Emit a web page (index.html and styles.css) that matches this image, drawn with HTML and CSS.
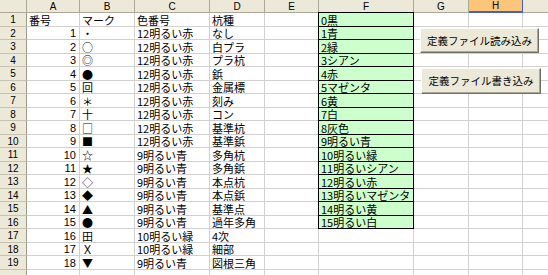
FILE: index.html
```html
<!DOCTYPE html>
<html lang="ja">
<head>
<meta charset="utf-8">
<link rel="stylesheet" href="styles.css">
</head>
<body>
<div class="wrap">
<div class="sheet">
<div class="h corner"></div><div class="h">A</div><div class="h">B</div><div class="h">C</div><div class="h">D</div><div class="h">E</div><div class="h">F</div><div class="h">G</div><div class="h sel">H</div><div class="h"></div>

<div class="rh">1</div><div class="c">番号</div><div class="c">マーク</div><div class="c">色番号</div><div class="c">杭種</div><div class="c"></div><div class="c g first">0黒</div><div class="c"></div><div class="c"></div><div class="c"></div>
<div class="rh">2</div><div class="c r">1</div><div class="c">・</div><div class="c">12明るい赤</div><div class="c">なし</div><div class="c"></div><div class="c g">1青</div><div class="c"></div><div class="c"></div><div class="c"></div>
<div class="rh">3</div><div class="c r">2</div><div class="c">○</div><div class="c">12明るい赤</div><div class="c">白プラ</div><div class="c"></div><div class="c g">2緑</div><div class="c"></div><div class="c"></div><div class="c"></div>
<div class="rh">4</div><div class="c r">3</div><div class="c">◎</div><div class="c">12明るい赤</div><div class="c">プラ杭</div><div class="c"></div><div class="c g">3シアン</div><div class="c"></div><div class="c"></div><div class="c"></div>
<div class="rh">5</div><div class="c r">4</div><div class="c">●</div><div class="c">12明るい赤</div><div class="c">鋲</div><div class="c"></div><div class="c g">4赤</div><div class="c"></div><div class="c"></div><div class="c"></div>
<div class="rh">6</div><div class="c r">5</div><div class="c">回</div><div class="c">12明るい赤</div><div class="c">金属標</div><div class="c"></div><div class="c g">5マゼンタ</div><div class="c"></div><div class="c"></div><div class="c"></div>
<div class="rh">7</div><div class="c r">6</div><div class="c">＊</div><div class="c">12明るい赤</div><div class="c">刻み</div><div class="c"></div><div class="c g">6黄</div><div class="c"></div><div class="c"></div><div class="c"></div>
<div class="rh">8</div><div class="c r">7</div><div class="c">十</div><div class="c">12明るい赤</div><div class="c">コン</div><div class="c"></div><div class="c g">7白</div><div class="c"></div><div class="c"></div><div class="c"></div>
<div class="rh">9</div><div class="c r">8</div><div class="c">□</div><div class="c">12明るい赤</div><div class="c">基準杭</div><div class="c"></div><div class="c g">8灰色</div><div class="c"></div><div class="c"></div><div class="c"></div>
<div class="rh">10</div><div class="c r">9</div><div class="c">■</div><div class="c">12明るい赤</div><div class="c">基準鋲</div><div class="c"></div><div class="c g">9明るい青</div><div class="c"></div><div class="c"></div><div class="c"></div>
<div class="rh">11</div><div class="c r">10</div><div class="c">☆</div><div class="c">9明るい青</div><div class="c">多角杭</div><div class="c"></div><div class="c g">10明るい緑</div><div class="c"></div><div class="c"></div><div class="c"></div>
<div class="rh">12</div><div class="c r">11</div><div class="c">★</div><div class="c">9明るい青</div><div class="c">多角鋲</div><div class="c"></div><div class="c g">11明るいシアン</div><div class="c"></div><div class="c"></div><div class="c"></div>
<div class="rh">13</div><div class="c r">12</div><div class="c">◇</div><div class="c">9明るい青</div><div class="c">本点杭</div><div class="c"></div><div class="c g">12明るい赤</div><div class="c"></div><div class="c"></div><div class="c"></div>
<div class="rh">14</div><div class="c r">13</div><div class="c">◆</div><div class="c">9明るい青</div><div class="c">本点鋲</div><div class="c"></div><div class="c g">13明るいマゼンタ</div><div class="c"></div><div class="c"></div><div class="c"></div>
<div class="rh">15</div><div class="c r">14</div><div class="c">▲</div><div class="c">9明るい青</div><div class="c">基準点</div><div class="c"></div><div class="c g">14明るい黄</div><div class="c"></div><div class="c"></div><div class="c"></div>
<div class="rh">16</div><div class="c r">15</div><div class="c">●</div><div class="c">9明るい青</div><div class="c">過年多角</div><div class="c"></div><div class="c g">15明るい白</div><div class="c"></div><div class="c"></div><div class="c"></div>
<div class="rh">17</div><div class="c r">16</div><div class="c">田</div><div class="c">10明るい緑</div><div class="c">4次</div><div class="c"></div><div class="c"></div><div class="c"></div><div class="c"></div><div class="c"></div>
<div class="rh">18</div><div class="c r">17</div><div class="c">Ｘ</div><div class="c">10明るい緑</div><div class="c">細部</div><div class="c"></div><div class="c"></div><div class="c"></div><div class="c"></div><div class="c"></div>
<div class="rh">19</div><div class="c r">18</div><div class="c">▼</div><div class="c">9明るい青</div><div class="c">図根三角</div><div class="c"></div><div class="c"></div><div class="c"></div><div class="c"></div><div class="c"></div>
<div class="rh"></div><div class="c"></div><div class="c"></div><div class="c"></div><div class="c"></div><div class="c"></div><div class="c"></div><div class="c"></div><div class="c"></div><div class="c"></div>
</div>
<button class="btn btn-read">定義ファイル読み込み</button>
<button class="btn btn-write">定義ファイル書き込み</button>
</div>
</body>
</html>
```
FILE: styles.css
```css
html, body {
  margin: 0;
  padding: 0;
  background: #ffffff;
  overflow: hidden;
}
.wrap {
  position: relative;
  width: 548px;
  height: 275px;
  overflow: hidden;
}
.sheet {
  display: grid;
  grid-template-columns: 27px 53px 55px 75px 55px 54px 95px 55px 54px 54px;
  grid-template-rows: repeat(11, 13px 14px);
  font-family: "Noto Sans CJK JP", "Liberation Sans", sans-serif;
  font-size: 11px;
  color: #000;
}
.h, .rh {
  background: #ece9d8;
  border-right: 1px solid #aca899;
  border-bottom: 1px solid #aca899;
  font-family: "Liberation Sans", "DejaVu Sans", sans-serif;
  font-size: 10px;
  color: #000;
  display: flex;
  align-items: center;
  justify-content: center;
  line-height: 11px;
  box-sizing: border-box;
}
.rh {
  border-bottom: 1px solid #c5c2b2;
  border-right: 1px solid #9d9a8a;
}
.sel {
  background: #fcc57a;
  border-bottom: 2px solid #4a5fc4;
  border-right: 1px solid #4a5fc4;
}
.c {
  border-right: 1px solid #d0d0d0;
  border-bottom: 1px solid #d0d0d0;
  box-sizing: border-box;
  display: flex;
  align-items: center;
  padding: 0 0 0 2px;
  line-height: 12px;
  white-space: nowrap;
  overflow: visible;
}
.r {
  justify-content: flex-end;
  padding: 0 3px 0 0;
  font-family: "Liberation Sans", sans-serif;
  font-size: 11px;
}
.g {
  background: #ccffcc;
  border-right: 1px solid #000;
  border-bottom: 1px solid #000;
  box-shadow: -1px 0 0 #000;
}
.g.first {
  box-shadow: -1px 0 0 #000, -1px -1px 0 #000, 0 -1px 0 #000;
}
.btn {
  position: absolute;
  margin: 0;
  padding: 0;
  background: #ece9d8;
  border: 1px solid;
  border-color: #ffffff #716f64 #716f64 #ffffff;
  box-shadow: inset -1px -1px 0 #aca899;
  font-family: "Noto Sans CJK JP", sans-serif;
  font-size: 10.5px;
  color: #000;
  line-height: 12px;
}
.btn-read {
  left: 420px;
  top: 28px;
  width: 119px;
  height: 25px;
}
.btn-write {
  left: 421px;
  top: 68px;
  width: 120px;
  height: 26px;
}
```
